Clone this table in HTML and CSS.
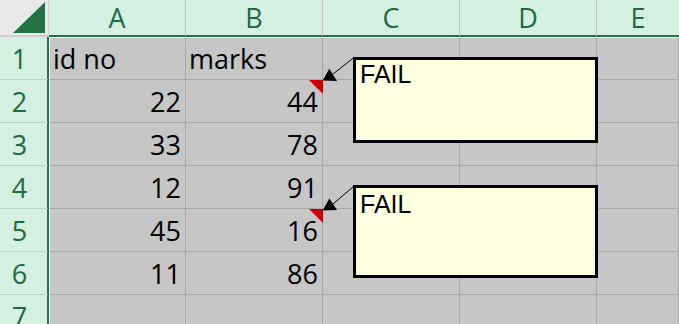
FILE: index.html
```html
<!DOCTYPE html>
<html lang="en">
<head>
<meta charset="utf-8">
<title>Sheet1</title>
<link rel="stylesheet" href="styles.css">
</head>
<body>
<div class="sheet">
  <div class="grid">
    <div class="corner">
      <svg class="corner-mark" width="49" height="35" viewBox="0 0 49 35"><polygon points="13,33 45,33 45,2" fill="#217346"/></svg>
    </div>
    <div class="col-hd">A</div>
    <div class="col-hd">B</div>
    <div class="col-hd">C</div>
    <div class="col-hd">D</div>
    <div class="col-hd last">E</div>

    <div class="row-hd">1</div>
    <div class="cell first top">id no</div>
    <div class="cell top">marks</div>
    <div class="cell top"></div><div class="cell top"></div><div class="cell top"></div>

    <div class="row-hd">2</div>
    <div class="cell first num">22</div>
    <div class="cell num has-note">44</div>
    <div class="cell"></div><div class="cell"></div><div class="cell"></div>

    <div class="row-hd">3</div>
    <div class="cell first num">33</div>
    <div class="cell num">78</div>
    <div class="cell"></div><div class="cell"></div><div class="cell"></div>

    <div class="row-hd">4</div>
    <div class="cell first num">12</div>
    <div class="cell num">91</div>
    <div class="cell"></div><div class="cell"></div><div class="cell"></div>

    <div class="row-hd">5</div>
    <div class="cell first num">45</div>
    <div class="cell num has-note">16</div>
    <div class="cell"></div><div class="cell"></div><div class="cell"></div>

    <div class="row-hd">6</div>
    <div class="cell first num">11</div>
    <div class="cell num">86</div>
    <div class="cell"></div><div class="cell"></div><div class="cell"></div>

    <div class="row-hd">7</div>
    <div class="cell first"></div>
    <div class="cell"></div>
    <div class="cell"></div><div class="cell"></div><div class="cell"></div>
  </div>

  <!-- callout leaders from the comment boxes to their cells -->
  <svg class="leaders" width="679" height="324" viewBox="0 0 679 324">
    <line x1="333" y1="74" x2="354" y2="57.5" stroke="#000" stroke-width="1"/>
    <polygon points="322.7,80.5 329.3,68.8 337,81" fill="#000"/>
    <line x1="333" y1="204" x2="354" y2="186" stroke="#000" stroke-width="1"/>
    <polygon points="322.7,210.5 329.3,198.5 337,210" fill="#000"/>
  </svg>

  <div class="note note-b2">FAIL</div>
  <div class="note note-b5">FAIL</div>
</div>
</body>
</html>
```

FILE: styles.css
```css
html, body {
  margin: 0;
  padding: 0;
  background: #c6c6c6;
}

.sheet {
  position: relative;
  width: 679px;
  height: 324px;
  overflow: hidden;
  font-family: "Open Sans", "Noto Sans", sans-serif;
  font-size: 27px;
}

.grid {
  display: grid;
  grid-template-columns: 49px 137px 137px 137px 137px 82px;
  grid-template-rows: 37px repeat(7, 43px);
}

/* select-all corner */
.corner {
  box-sizing: border-box;
  background: #e9e9e9;
  border-right: 1px solid #cfcfcf;
  border-bottom: 2px solid #cfcfcf;
}
.corner-mark {
  display: block;
}

/* column letters */
.col-hd {
  box-sizing: border-box;
  background: #d3f0e0;
  color: #1d6b40;
  border-right: 1px solid #c4c4c4;
  border-bottom: 2px solid #217346;
  display: flex;
  align-items: center;
  justify-content: center;
  line-height: 35px;
}
.col-hd.last {
  border-right: none;
}

/* row numbers */
.row-hd {
  box-sizing: border-box;
  background: #d3f0e0;
  color: #1d6b40;
  border-right: 2px solid #217346;
  border-bottom: 1px solid #bcd3c5;
  display: flex;
  align-items: flex-end;
  justify-content: center;
  padding: 0 8px 2px 0;
  line-height: 36px;
}

/* data cells */
.cell {
  position: relative;
  box-sizing: border-box;
  background: #c6c6c6;
  color: #000;
  border-right: 1px solid #a8a8a8;
  border-bottom: 1px solid #a8a8a8;
  display: flex;
  align-items: flex-end;
  padding: 0 4px 2px 3px;
  line-height: 36px;
  white-space: nowrap;
}
/* white selection edge along the top and left of the used range */
.cell.top {
  border-top: 1px solid #ffffff;
}
.cell.first {
  border-left: 1px solid #ffffff;
}
.cell.num {
  justify-content: flex-end;
}

/* red comment indicator in the cell's top-right corner */
.cell.has-note::after {
  content: "";
  position: absolute;
  top: 0;
  right: -1px;
  width: 0;
  height: 0;
  border-top: 14px solid #cc0000;
  border-left: 14px solid transparent;
}

.leaders {
  position: absolute;
  left: 0;
  top: 0;
  pointer-events: none;
}

/* comment pop-ups */
.note {
  position: absolute;
  box-sizing: border-box;
  left: 353px;
  width: 245px;
  background: #ffffe1;
  border: 3px solid #000;
  font-family: "Liberation Sans", Arial, sans-serif;
  font-size: 25px;
  line-height: 28px;
  padding: 0 0 0 4px;
  color: #000;
}
.note-b2 {
  top: 57px;
  height: 86px;
}
.note-b5 {
  top: 185px;
  height: 93px;
  padding-top: 2px;
}
```
